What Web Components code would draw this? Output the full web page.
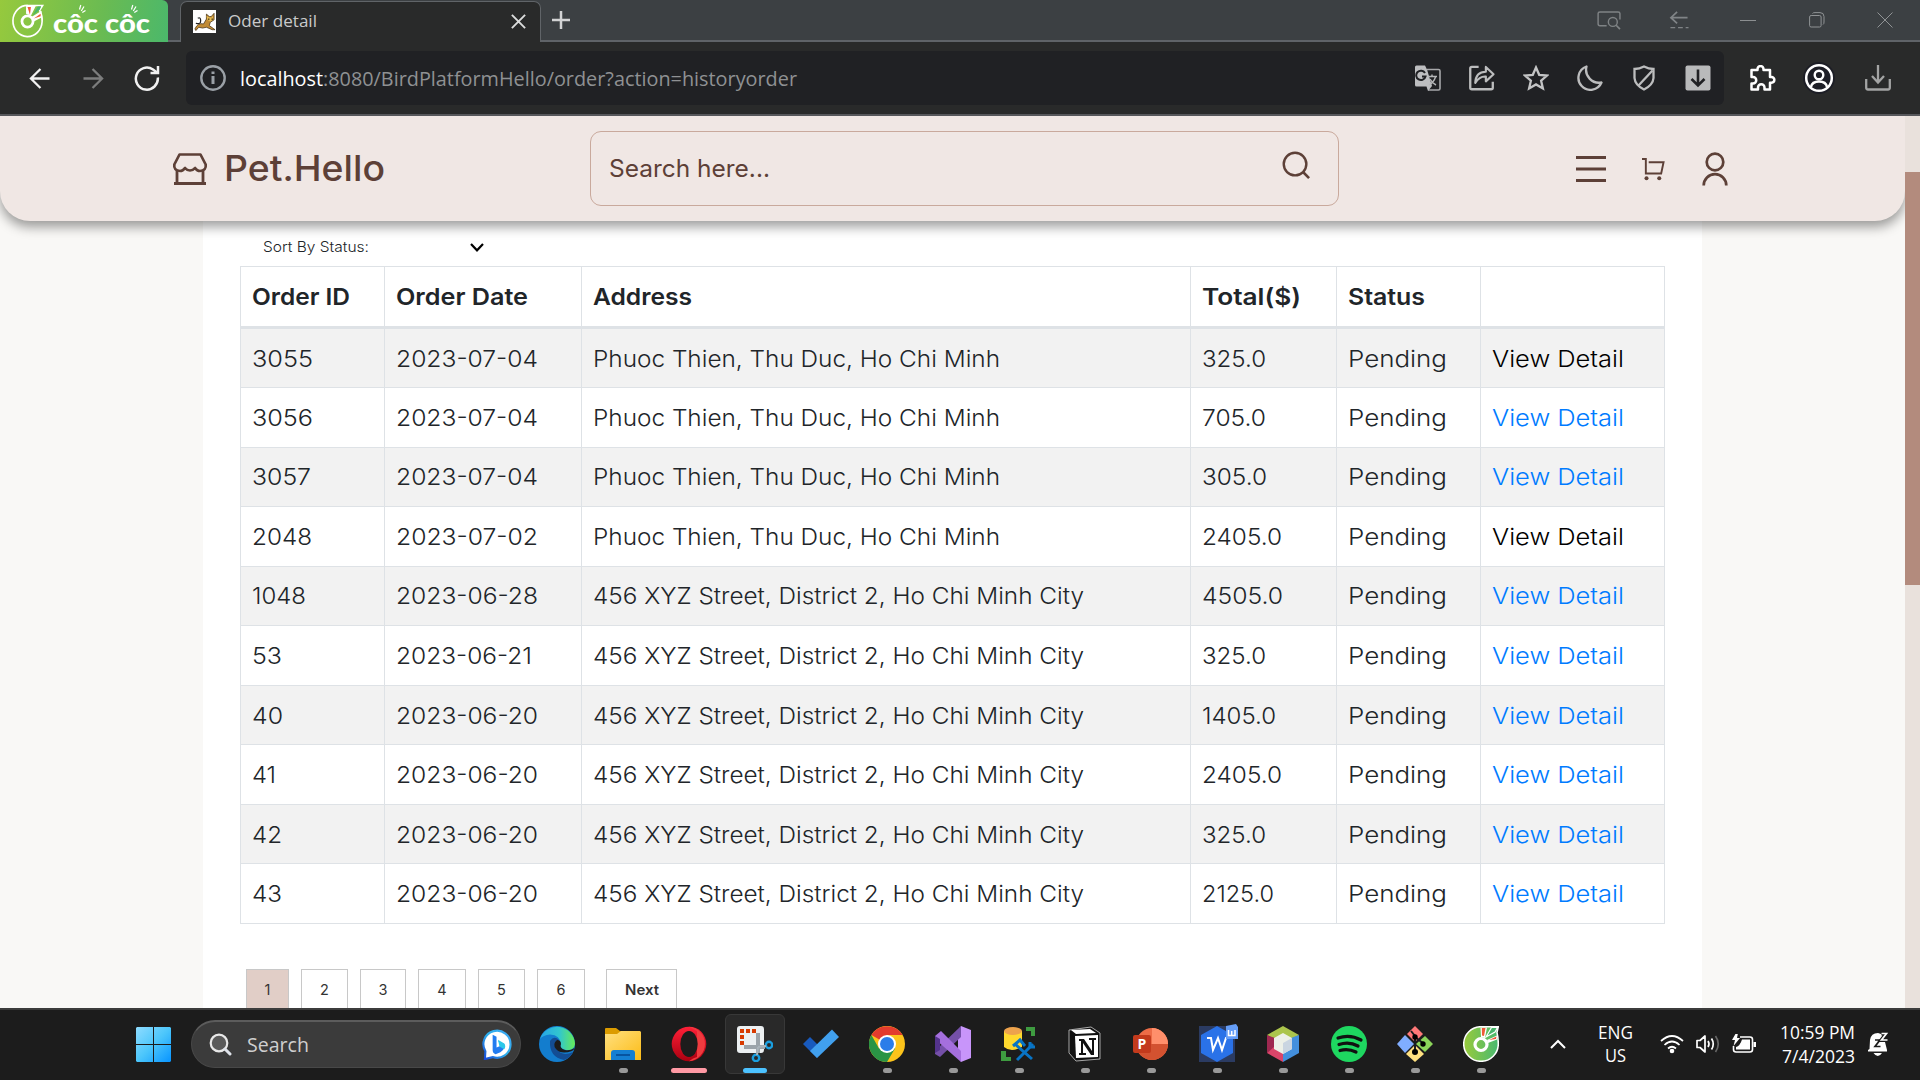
<!DOCTYPE html>
<html lang="en"><head><meta charset="utf-8"><title>Oder detail</title>
<style>
html,body{margin:0;height:1080px;width:1920px;overflow:hidden;background:#f9f8f6}
body{display:flex;flex-direction:column;font-family:Inter,"Open Sans",sans-serif}
</style></head><body>
<browser-chrome></browser-chrome>
<shop-page></shop-page>
<task-bar></task-bar>
<script>
const ICONS={
coccoc:'<svg viewBox="0 0 36 36"><defs><linearGradient id="g"><stop stop-color="#99ca3b"/><stop offset="1" stop-color="#48b970"/></linearGradient></defs><path d="M18 .7H35.3L34 6.500Q35.300 12 35.300 18A17.300 17.300 0 1 1 18 .7Z" fill="url(#g)" stroke="#fff" stroke-width="1.500"/><circle cx="18" cy="18.500" r="6" fill="none" stroke="#fff" stroke-width="3.200"/><path d="M18 11L17.500 1.500H24L22 12ZM24 14L34 9.500 34 13.500 25 17Z" fill="#fff"/><path d="M19 9.500L18.800 2H22.500L21 10ZM26 14L33.500 10.500 33 13Z" fill="#ef5a36"/><path d="M23 11L28.500 1.500H34.500L32 6Z" fill="#49b66b" stroke="#fff" stroke-width="1.200"/></svg>',
cclogo:'<svg viewBox="0 0 34 36"><path d="M17 1.500H32L29 6.500Q32 12 31.500 18A15 16 0 1 1 17 1.500Z" fill="none" stroke="#fff" stroke-width="1.700"/><circle cx="16.500" cy="18" r="5.700" fill="none" stroke="#fff" stroke-width="2.800"/><path d="M15 10V2H25L20 12ZM21 13L31 7 31 14 23 18Z" fill="#fff"/><path d="M16.500 3H20L19 11ZM23 15L30 10V12.500Z" fill="#ef5a36"/><path d="M21.500 12L27 2.500H30.500L29 6Z" fill="#49b66b"/></svg>',
rays:'<svg viewBox="0 0 8 9"><path d="M1.500 5.500L2.800 1M3.300 7L6 2.500M4.300 8.500L7.500 6.500" stroke="#fff" stroke-width="1.200"/></svg>',
fav:'<svg viewBox="0 0 24 28" preserveAspectRatio="none"><rect width="24" height="28" fill="#fff"/><path d="M2 23Q5 15 11 17L14 11V5L17 8H19L22 4V12L18 15 17 19 23 24 20 24 14 21 10 22 6 21 3 25Z" fill="#c18b35" stroke="#3c2c12" stroke-width=".8"/><path d="M3 16Q8 18 8 13T5 10" fill="none" stroke="#222" stroke-width="1.300"/><path d="M14 7L17 9H20L21 6V12L18 14 15 12Z" fill="#e8bd52"/><circle cx="16.500" cy="11" r=".8"/><circle cx="20" cy="11" r=".8"/></svg>',
x:'<svg viewBox="0 0 18 18"><path d="M2 2L16 16M16 2L2 16" stroke="#dcdddd" stroke-width="2"/></svg>',
plus:'<svg viewBox="0 0 18 18"><path d="M9 0V18M0 9H18" stroke="#d2d3d4" stroke-width="2.500"/></svg>',
wsearch:'<svg viewBox="0 0 26 20"><path d="M10 15.500H3Q1 15.500 1 13.500V2.500Q1 1 3 1H22Q24 1 24 2.500V9" fill="none" stroke="#7f8385" stroke-width="1.500"/><circle cx="16.500" cy="11.500" r="4.700" fill="none" stroke="#7f8385" stroke-width="1.500"/><path d="M20 15L24 19" stroke="#7f8385" stroke-width="1.800"/></svg>',
wback:'<svg viewBox="0 0 20 20"><path d="M8 1L1.500 7 8 13M1.500 7H19" fill="none" stroke="#808487" stroke-width="1.800"/><path d="M1 17.500H20" stroke="#808487" stroke-width="1.500" stroke-dasharray="5 3"/></svg>',
wmin:'<svg viewBox="0 0 16 16"><path d="M0 8.500H16" stroke="#8c8f91"/></svg>',
wmax:'<svg viewBox="0 0 16 16"><rect x=".6" y="3.500" width="11.500" height="11.500" rx="1.500" fill="none" stroke="#909395"/><path d="M3.500 1.500Q4 .6 6 .6H11Q15 .6 15 4.500V10Q15 12 14 12.500" fill="none" stroke="#909395"/></svg>',
wx:'<svg viewBox="0 0 16 16"><path d="M.5 .5L15.500 15.500M15.500 .5L.5 15.500" stroke="#909395"/></svg>',
back:'<svg viewBox="0 0 22 22"><path d="M12 1L2 11 12 21M2 11H21.500" fill="none" stroke="#f1f1f1" stroke-width="2.400"/></svg>',
fwd:'<svg viewBox="0 0 22 22"><path d="M10 1L20 11 10 21M20 11H.5" fill="none" stroke="#7c7d7d" stroke-width="2.400"/></svg>',
reload:'<svg viewBox="0 0 26 26"><path d="M23.800 12.500A11 11 0 1 1 19 4.500L23 7.500" fill="none" stroke="#f1f1f1" stroke-width="2.500"/><path d="M24 1V8H16.500" fill="none" stroke="#f1f1f1" stroke-width="2.500"/></svg>',
info:'<svg viewBox="0 0 26 26"><circle cx="13" cy="13" r="11.700" fill="none" stroke="#9aa0a6" stroke-width="2.400"/><path d="M13 11V19M13 6.500V9" stroke="#9aa0a6" stroke-width="3"/></svg>',
translate:'<svg viewBox="0 0 26 26"><path d="M12 4.500H23.500Q25 4.500 25 6V23.500Q25 25 23.500 25H13" fill="none" stroke="#a7a8aa" stroke-width="1.600"/><path d="M0 2Q0 .5 1.500 .5H10L12 4.500 17 21 13 26 11.500 21.500H1.500Q0 21.500 0 20Z" fill="#bdbec0"/><path d="M10 8A4.700 4.700 0 1 0 10.500 11.500H7" fill="none" stroke="#202124" stroke-width="2"/><path d="M13 11.500H22M17 9.500V11.500M20.500 12Q19 17 14 20M15 14Q17 18 21 20" fill="none" stroke="#b5b6b8" stroke-width="1.400"/></svg>',
share:'<svg viewBox="0 0 27 26"><path d="M10 1.500H3Q1.300 1.500 1.300 3V23Q1.300 24.700 3 24.700H23Q24.700 24.700 24.700 23V17" fill="none" stroke="#bcbdbe" stroke-width="2.400"/><path d="M6.500 18Q7 6.500 17.500 6.500V1.500L25.500 9 17.500 16.500V11.500Q11 11 6.500 18Z" fill="none" stroke="#bcbdbe" stroke-width="2.200" stroke-linejoin="round"/></svg>',
star:'<svg viewBox="0 0 26 26"><path d="M13 2.500L16.200 9.800 24 10.500 18.100 15.700 19.900 23.500 13 19.400 6.100 23.500 7.900 15.700 2 10.500 9.800 9.800Z" fill="none" stroke="#c3c4c5" stroke-width="2.300"/></svg>',
moon:'<svg viewBox="0 0 26 26"><path d="M9.500 1.500A12 12 0 1 0 24.500 17.500 13 13 0 0 1 9.500 1.500Z" fill="none" stroke="#bcbdbe" stroke-width="2.300" stroke-linejoin="round"/></svg>',
shield:'<svg viewBox="0 0 26 26"><path d="M13 1.500Q17.500 4 22.500 4V13Q22 20 13 24.500Q4 20 3.500 13V4Q8.500 4 13 1.500Z" fill="none" stroke="#bcbdbe" stroke-width="2.300"/><path d="M21.500 5.500L7.500 20.500" stroke="#bcbdbe" stroke-width="2.300"/></svg>',
down:'<svg viewBox="0 0 26 26"><rect x=".5" y=".5" width="25" height="25" rx="2" fill="#b9babb"/><path d="M13 4.500V20M6.500 14L13 20.500 19.500 14" fill="none" stroke="#202124" stroke-width="2.600"/></svg>',
puzzle:'<svg viewBox="0 0 26 26"><path d="M2 5H7.500V4A3 3 0 0 1 13.500 4V5H20V12H21.500A2.800 2.800 0 0 1 21.500 17.700H20V24.500H14.500V22.500A3.200 3.200 0 0 0 8 22.500V24.500H1.500V18.500H3A3.200 3.200 0 0 0 3 12H1.500V5Z" fill="none" stroke="#fff" stroke-width="2.500" stroke-linejoin="round"/></svg>',
profile:'<svg viewBox="0 0 32 32"><circle cx="16" cy="16" r="16" fill="#1d1e26"/><circle cx="16" cy="16" r="12.800" fill="none" stroke="#fff" stroke-width="2.500"/><circle cx="16" cy="13" r="4.300" fill="none" stroke="#fff" stroke-width="2.400"/><path d="M8 25Q9 19.500 16 19.500T24 25" fill="none" stroke="#fff" stroke-width="2.400"/></svg>',
dl:'<svg viewBox="0 0 26 26"><path d="M13 0V17M7 11L13 17.500 19 11M1.200 14V22.500Q1.200 24.500 3 24.500H23Q24.800 24.500 24.800 22.500V14" fill="none" stroke="#a3a4a4" stroke-width="2.300"/></svg>',
store:'<svg viewBox="0 0 36 34"><path d="M7.500 2.500H28.500L33.700 12.500Q34.500 18.500 28 19Q25 19 23 16Q21 18.500 18 18.500T13 16Q11 19 8 19Q1.500 18.500 2.300 12.500Z" fill="none" stroke="#5d4037" stroke-width="2.700" stroke-linejoin="round"/><path d="M5 18V31.500M31 18V31.500M2 31.500H34" fill="none" stroke="#5d4037" stroke-width="2.800"/></svg>',
search:'<svg viewBox="0 0 30 30"><circle cx="13.500" cy="13.500" r="11.700" fill="none" stroke="#5d4037" stroke-width="2.500"/><path d="M21.500 21.500L28 28" stroke="#5d4037" stroke-width="2.700"/></svg>',
menu:'<svg viewBox="0 0 30 28"><path d="M0 2.500H30M0 14H30M0 25.500H30" stroke="#5d4037" stroke-width="2.800"/></svg>',
cart:'<svg viewBox="0 0 24 24"><path d="M0 1.500H4V16.700H20L22.500 5H7" fill="none" stroke="#5d4037" stroke-width="2"/><circle cx="4.700" cy="21.700" r="2.100" fill="#5d4037"/><circle cx="18" cy="21.700" r="2.100" fill="#5d4037"/></svg>',
user:'<svg viewBox="0 0 26 34"><circle cx="13" cy="10" r="8.300" fill="none" stroke="#5d4037" stroke-width="2.700"/><path d="M1.700 33.500A11.300 11.300 0 0 1 24.300 33.500" fill="none" stroke="#5d4037" stroke-width="2.700"/></svg>',
chev:'<svg viewBox="0 0 14 9"><path d="M1 1L7 7.300 13 1" fill="none" stroke="#000" stroke-width="2.200"/></svg>',
win:'<svg viewBox="0 0 35 35"><defs><linearGradient id="g" x2="1" y2="1"><stop stop-color="#8fdcff"/><stop offset=".5" stop-color="#4cc6fb"/><stop offset="1" stop-color="#0794ff"/></linearGradient></defs><path d="M1 0H17V17H0V1ZM18 0H34L35 1V17H18ZM0 18H17V35H1L0 34ZM18 18H35V34L34 35H18Z" fill="url(#g)"/></svg>',
tsearch:'<svg viewBox="0 0 23 23"><circle cx="10" cy="10" r="8.300" fill="#5a5a5a" stroke="#e8e8e8" stroke-width="2.200"/><path d="M16 16L21 21" stroke="#dfe3ea" stroke-width="3" stroke-linecap="round"/></svg>',
bing:'<svg viewBox="0 0 32 32"><defs><linearGradient id="g" x1="1" x2="0" y2="1"><stop stop-color="#3fa8f5"/><stop offset=".5" stop-color="#2caeea"/><stop offset="1" stop-color="#1745d8"/></linearGradient></defs><path d="M3 31L3.500 23A14 14 0 1 1 11 29L3 31Z" fill="#fff" stroke="url(#g)" stroke-width="2.200"/><path d="M11 6L15 8V19L20 17 16.500 12 23 15.500Q25 20 19 24L14 26Q11 25 11 22Z" fill="#227cf0"/><path d="M16.500 11L23 15Q25 18 23 21L18 18Z" fill="#2cc8e8"/></svg>',
edge:'<svg viewBox="0 0 36 36"><defs><linearGradient id="g"><stop stop-color="#27a5e6"/><stop offset=".55" stop-color="#31c6cf"/><stop offset="1" stop-color="#66eb57"/></linearGradient></defs><circle cx="18" cy="18" r="18" fill="#137dce"/><path d="M1 13A18 18 0 0 1 36 18Q35 25 27 24Q21 23 21.500 19Q22 9 11 8.500Q4 9 1 13Z" fill="url(#g)"/><path d="M11 15Q10 31 25 34Q32 31 34 26Q23 31 18 23Q15 17 20 14Q15 9 11 15Z" fill="#134d94"/><path d="M18 14Q13 18 17 23Q22 29 33 25Q35 24 35.500 22Q31 25 26 24Q20 22 22 18Q22 14 18 14Z" fill="#1c1c1c"/></svg>',
folder:'<svg viewBox="0 0 36 36"><defs><linearGradient id="g" x2="1" y2="1"><stop stop-color="#ffe080"/><stop offset="1" stop-color="#fcbc17"/></linearGradient></defs><path d="M0 3Q0 2 1 2H11L15 5H20V12H0Z" fill="#dc9c00"/><path d="M0 8H12L16 5H35L36 6V34H0Z" fill="url(#g)"/><path d="M6 34V27Q6 24 9 24H27Q30 24 30 27V34Z" fill="#147fd2"/><path d="M11 29H25" stroke="#0754a0" stroke-width="2"/></svg>',
opera:'<svg viewBox="0 0 36 36"><defs><linearGradient id="g" x2="0" y2="1"><stop stop-color="#ff2038"/><stop offset="1" stop-color="#aa0010"/></linearGradient></defs><circle cx="18" cy="18" r="17.300" fill="url(#g)"/><path d="M18 .8A17.300 17.300 0 0 1 18 35.300Q22 32 26 31V5Z" fill="#ef3b3f"/><ellipse cx="18" cy="18" rx="8.700" ry="13" fill="#1c1c1c"/></svg>',
snip:'<svg viewBox="0 0 36 36"><rect x="0" y="0" width="27" height="27" rx="3" fill="#ecf0f2"/><path d="M3 3H7V7H3ZM9 3H13V7H9ZM15 3H19V7H15ZM3 9H7V13H3ZM3 15H7V19H3Z" fill="#d83b01"/><path d="M21 7V27M7 21H28" stroke="#9ca4aa" stroke-width="4"/><circle cx="32" cy="19" r="3.200" fill="none" stroke="#1a9fe0" stroke-width="2.400"/><circle cx="19" cy="32" r="3.200" fill="none" stroke="#1a9fe0" stroke-width="2.400"/><path d="M21 21L29 20M21 21L20 29" stroke="#aab4bb" stroke-width="2"/></svg>',
todo:'<svg viewBox="0 0 36 36"><path d="M0 18L7 11 18 22 14 32Z" fill="#185abd"/><path d="M7 25L29 3.500 36 11 14 32Z" fill="#41a0ee"/></svg>',
chrome:'<svg viewBox="0 0 36 36"><circle cx="18" cy="18" r="18" fill="#fcc31b"/><path d="M18 18L2.500 9A18 18 0 0 1 33.500 9H18Z" fill="#e33b2e"/><path d="M2.400 9A18 18 0 0 0 18 36L26 22.500 18 18 10 22.500Z" fill="#2a9445"/><circle cx="18" cy="18" r="9" fill="#fff"/><circle cx="18" cy="18" r="7" fill="#2b7de9"/></svg>',
vs:'<svg viewBox="0 0 36 36"><path d="M26 0L36 4V32L26 36 23 27V9Z" fill="#c895fa"/><path d="M0 25L26 0V11L5 31 0 28Z" fill="#7550a8"/><path d="M0 10L6 5 26 25V36L0 13Z" fill="#a56fdd"/><path d="M0 10L5 13V24L0 27Z" fill="#54338c"/></svg>',
ssms:'<svg viewBox="0 0 36 36"><path d="M25 1H34V10H30V5H25ZM0 25H5V31H10V35H0Z" fill="#3e9b40"/><path d="M3 5V21Q10 27 21 21V5Z" fill="#ffd92e"/><ellipse cx="12" cy="5" rx="9" ry="4" fill="#eda34d"/><path d="M14 18L31 33M32 18L16 34" stroke="#0874c5" stroke-width="3"/><path d="M12 20L19 14 24 20M29 16V21H34" fill="none" stroke="#0874c5" stroke-width="3"/></svg>',
notion:'<svg viewBox="0 0 36 36"><path d="M2 4L24 1 33 7V33L9 35 2 27Z" fill="#111" stroke="#ccc" stroke-width=".8"/><path d="M4 4L23 3 29 7 9 8Z" fill="#fff"/><path d="M8 10L31 9V31L9 32Z" fill="#fff"/><path d="M12 13H17L25 25V14H22V12H29V14H27V29H24L16 17V27H19V29H12V27H14V15H12Z" fill="#111"/></svg>',
ppt:'<svg viewBox="0 0 36 36"><circle cx="19" cy="18" r="16" fill="#ed6c47"/><path d="M19 2A16 16 0 0 1 35 18H19Z" fill="#ff8f6b"/><path d="M3 18H35A16 16 0 0 1 3 18Z" fill="#d35230"/><rect x="0" y="9" width="18" height="18" rx="2" fill="#c33a1c"/><text x="4.500" y="23" font-family="Open Sans" font-weight="700" font-size="14" fill="#fff">P</text></svg>',
wps:'<svg viewBox="0 2 36 36" style="overflow:visible"><path d="M0 2H36V38H0Z" fill="#2b3b62"/><path d="M18 2L34 11V29L18 38 2 29V11Z" fill="#2a72e8"/><path d="M8 14H12L14 26 19 14 23 26 27 14H30" fill="none" stroke="#fff" stroke-width="2"/><path d="M27 2L37 0 39 3V15H27Z" fill="#649df7"/><path d="M29.500 6V11.500H36V6M32.700 7V11" fill="none" stroke="#fff" stroke-width="1.500"/></svg>',
netbeans:'<svg viewBox="0 0 36 36"><path d="M18 0L34 9 18 18 2 9Z" fill="#acc54c"/><path d="M2 9V27L10 22V12Z" fill="#9f2850"/><path d="M2 27L18 36V24L10 20Z" fill="#db4569"/><path d="M34 9V27L18 36V24L26 12Z" fill="#438fdd"/><path d="M18 7L27 12V23L18 28 9 23V12Z" fill="#edf0e8"/><path d="M18 17L27 12V23L18 28Z" fill="#cad5e1"/></svg>',
spotify:'<svg viewBox="0 0 36 36"><circle cx="18" cy="18" r="18" fill="#1ed760"/><path d="M7 12Q19 8 30 14M8 18.500Q18 15 27 20M9 24.500Q17 22 25 26" fill="none" stroke="#111" stroke-width="3.200" stroke-linecap="round"/></svg>',
git:'<svg viewBox="0 0 36 36"><path d="M18 0L26 8 18 16 10 8Z" fill="#ff7878"/><path d="M8 9L17 18 8 27 0 18Z" fill="#80adff"/><path d="M28 10L36 18 28 26 19 18Z" fill="#8bd45a"/><path d="M18 19L27 28 18 36 9 28Z" fill="#ffe080"/><path d="M14 5L18 10V27M18 11L27 18" fill="none" stroke="#181c20" stroke-width="2"/><circle cx="18" cy="11" r="2.700"/><circle cx="18" cy="26" r="3"/><circle cx="26" cy="18" r="2.700"/></svg>',
up:'<svg viewBox="0 0 16 10"><path d="M1 9L8 2 15 9" fill="none" stroke="#fff" stroke-width="2"/></svg>',
wifi:'<svg viewBox="0 0 24 20"><path d="M1 7Q12-3 23 7M4.500 11Q12 4 19.500 11M8 14.500Q12 11 16 14.500" fill="none" stroke="#fff" stroke-width="1.700"/><circle cx="12" cy="17" r="2.300" fill="#fff"/></svg>',
sound:'<svg viewBox="0 0 24 20"><path d="M1 6.500H4L9 2V18L4 13.500H1Z" fill="none" stroke="#fff" stroke-width="1.700" stroke-linejoin="round"/><path d="M12 7Q14 10 12 13M15.500 4.500Q19 10 15.500 15.500" fill="none" stroke="#fff" stroke-width="1.700"/><path d="M19.500 2Q25 10 19.500 18" fill="none" stroke="#666" stroke-width="1.700"/></svg>',
batt:'<svg viewBox="0 0 24 20"><path d="M8 3H18Q20.500 3 20.500 5.500V15.500Q20.500 18 18 18H4Q1.500 18 1.500 15.500V12" fill="none" stroke="#fff" stroke-width="1.600"/><path d="M10 5.500H18V15.500H4V13Q8 12 10 5.500Z" fill="#fff"/><path d="M21.500 8H24V13H21.500ZM4 -1L0 6H3L1.500 12 8 4H5L6 -1Z" fill="#fff"/></svg>',
bell:'<svg viewBox="0 0 22 24"><path d="M2.500 17L3 8Q4 1 11 1Q18 2 18 10L20 18V19.500H1V18ZM6.500 21H15Q13 24 10.800 24T6.500 21Z" fill="#fff"/><path d="M8 8H13L8 14.500H13.500" fill="none" stroke="#1c1c1c" stroke-width="1.700"/><path d="M14.500 1.500H19.500L14.500 8H20.500" fill="none" stroke="#1c1c1c" stroke-width="4"/><path d="M14.500 1.500H19.500L14.500 8H20.500" fill="none" stroke="#fff" stroke-width="1.700"/></svg>'
};
const define=(n,html)=>customElements.define(n,class extends HTMLElement{
 constructor(){super();this.attachShadow({mode:'open'}).innerHTML=html;}
});
// Inline glyph, sized through its w and h attributes.
customElements.define('ui-icon',class extends HTMLElement{
 connectedCallback(){
  if(this.shadowRoot)return;
  this.attachShadow({mode:'open'}).innerHTML='<style>:host{display:block;flex:none;width:'+this.getAttribute('w')+'px;height:'+this.getAttribute('h')+'px}svg{display:block;width:100%;height:100%}</style>'+ICONS[this.getAttribute('name')];
 }
});
// One line of text, stretched horizontally to fill the width w.
customElements.define('fit-text',class extends HTMLElement{
 connectedCallback(){
  if(this.shadowRoot)return;
  this.attachShadow({mode:'open'}).innerHTML='<style>:host{display:block;flex:none;white-space:pre}span{display:inline-block;transform-origin:0 50%}</style><span><slot></slot></span>';
  const s=this.shadowRoot.querySelector('span'),w=+this.getAttribute('w');
  this.style.width=w+'px';
  s.style.transform='scaleX('+w/s.getBoundingClientRect().width+')';
 }
});
define('browser-chrome',`<style>
:host{display:block;flex:none;height:116px;box-sizing:border-box;background:#292a2a;border-bottom:2px solid #56575b;font-family:"Open Sans",sans-serif}
*{box-sizing:border-box}
.tabs{height:42px;background:#3c4043;display:flex}
.logo{width:168px;height:42px;background:linear-gradient(100deg,#96c93d,#6abb52 60%,#4bb86b);border-radius:0 6px 0 0;display:flex;align-items:center;padding-left:11px;color:#fff}
.word{font:900 26px/34px Lato;margin-left:7px;position:relative;padding-top:4px}
.word ui-icon{position:absolute;left:25px;top:2px}
.gap{width:12px;border-bottom:2px solid #5f6368}
.tab{width:361px;height:41px;margin-top:1px;border:1px solid #606468;border-bottom:0;border-radius:7px 7px 0 0;background:#292a2a;display:flex;align-items:center;padding:0 13px 2px 12px;color:#c9cacb;font-size:16.800px}
.tab fit-text{margin:-2px auto 0 12px}
.rest{flex:1;border-bottom:2px solid #5f6368;display:flex;align-items:center;padding:0 27px 0 11px}
.win{margin-left:auto;display:flex}.win div{width:69px;display:flex;justify-content:center}.win div{align-items:center}
.win div:last-child{width:16px;margin-left:26px}
.bar{height:72px;display:flex;align-items:center;padding:0 29px}
.addr{width:1539px;height:54px;margin-left:26px;background:#202124;border-radius:6px;display:flex;align-items:center;padding:0 13px 0 14px;color:#8f9193;font-size:20.800px}
.icons{display:flex;gap:28px;margin-left:auto}
</style><div class="tabs"><div class="logo"><ui-icon name="cclogo" w="34" h="35"></ui-icon><div class="word" style="margin-left:8px"><fit-text w="45">côc</fit-text><ui-icon name="rays" w="8" h="9"></ui-icon></div><div class="word"><fit-text w="45">côc</fit-text><ui-icon name="rays" w="8" h="9"></ui-icon></div></div><div class="gap"></div>
<div class="tab"><ui-icon name="fav" w="23" h="23"></ui-icon><fit-text w="89">Oder detail</fit-text><ui-icon name="x" w="17" h="17"></ui-icon></div>
<div class="rest"><ui-icon name="plus" w="18" h="18"></ui-icon><div class="win"><div><ui-icon name="wsearch" w="25" h="19"></ui-icon></div><div><ui-icon name="wback" w="20" h="19"></ui-icon></div><div><ui-icon name="wmin" w="16" h="16"></ui-icon></div><div><ui-icon name="wmax" w="16" h="16"></ui-icon></div><div><ui-icon name="wx" w="16" h="16"></ui-icon></div></div></div></div>
<div class="bar"><ui-icon name="back" w="21" h="21"></ui-icon><ui-icon name="fwd" w="21" h="21" style="margin-left:33px"></ui-icon><ui-icon name="reload" w="26" h="26" style="margin-left:30px"></ui-icon>
<div class="addr"><ui-icon name="info" w="26" h="26"></ui-icon><fit-text w="83" style="margin-left:14px;color:#fff">localhost</fit-text><fit-text w="474">:8080/BirdPlatformHello/order?action=historyorder</fit-text><div class="icons"><ui-icon name="translate" w="26" h="26"></ui-icon><ui-icon name="share" w="26" h="26"></ui-icon><ui-icon name="star" w="26" h="26"></ui-icon><ui-icon name="moon" w="26" h="26"></ui-icon><ui-icon name="shield" w="26" h="26"></ui-icon><ui-icon name="down" w="26" h="26"></ui-icon></div></div>
<ui-icon name="puzzle" w="26" h="26" style="margin-left:26px"></ui-icon><ui-icon name="profile" w="32" h="32" style="margin-left:27px"></ui-icon><ui-icon name="dl" w="26" h="26" style="margin-left:30px"></ui-icon></div>`);
define('shop-header',`<style>
:host{display:flex;flex:none;align-items:center;height:105px;box-sizing:border-box;padding:0 177px 0 172px;background:#f0e7e4;border-radius:0 0 30px 30px;box-shadow:0 6px 12px rgba(0,0,0,.38);position:relative;color:#5d4037}
.brand{font-size:35.500px;font-weight:500;margin-left:16px}
.box{box-sizing:border-box;width:750px;height:75px;border:1px solid #c9a99c;border-radius:11px;display:flex;align-items:center;justify-content:space-between;padding:0 27px 0 18px;margin-left:205px;font-size:24px}
.box ui-icon{margin-bottom:7px}
</style><ui-icon name="store" w="36" h="34"></ui-icon><fit-text class="brand" w="161">Pet.Hello</fit-text><div class="box"><fit-text w="161">Search here...</fit-text><ui-icon name="search" w="29" h="29"></ui-icon></div>
<ui-icon name="menu" w="30" h="28" style="margin-left:237px"></ui-icon><ui-icon name="cart" w="23" h="24" style="margin-left:36px"></ui-icon><ui-icon name="user" w="26" h="34" style="margin-left:37px"></ui-icon>`);
const rows=[['3055',60,'2023-07-04',142,0,'325.0',63,1],['3056',60,'2023-07-04',142,0,'705.0',63,0],['3057',58,'2023-07-04',142,0,'305.0',64,0],['2048',59,'2023-07-02',142,0,'2405.0',79,1],['1048',53,'2023-06-28',142,1,'4505.0',80,0],['53',29,'2023-06-21',136,1,'325.0',63,0],['40',30,'2023-06-20',142,1,'1405.0',73,0],['41',23,'2023-06-20',142,1,'2405.0',79,0],['42',29,'2023-06-20',142,1,'325.0',63,0],['43',29,'2023-06-20',142,1,'2125.0',71,0]];
const c=(t,w,k='')=>`<div class="c ${k}">${t?`<fit-text w="${w}">${t}</fit-text>`:''}</div>`;
define('order-table',`<style>
:host{display:block;width:1425px;box-sizing:border-box;border:1px solid #dee2e6;border-width:1px 0 0 1px;font-size:23.400px;font-weight:350;color:#212529}
.r{display:grid;grid-template-columns:144px 197px 609px 146px 144px 184px;height:59.550px;box-sizing:border-box}
.r:nth-of-type(2){height:59px}
.r:nth-of-type(even){background:#f2f2f2}
.r.h{height:62px;font-weight:600}.h .c{border-bottom-width:3px}
.c{border:0 solid #dee2e6;border-width:0 1px 1px 0;padding-left:11px;display:flex;align-items:center}
.l{color:#007bff}.v{color:#000}
</style><div class="r h">${c('Order ID',98)+c('Order Date',132)+c('Address',99)+c('Total($)',99)+c('Status',77)+c()}</div>`+rows.map(r=>`<div class="r">${c(r[0],r[1]+1)+c(r[2],r[3])+(r[4]?c('456 XYZ Street, District 2, Ho Chi Minh City',491):c('Phuoc Thien, Thu Duc, Ho Chi Minh',407))+c(r[5],r[6]+1)+c('Pending',99)+c('View Detail',132,r[7]?'v':'l')}</div>`).join(''));
define('page-links',`<style>
:host{display:flex;margin:45px 0 0 6px;font-size:14.500px;color:#333}
div{box-sizing:border-box;height:44px;border:1px solid #c8c8c8;display:flex;justify-content:center;align-items:center;margin-right:12px;padding-bottom:2px}
.on{background:#e1cec7}.n{font-weight:600;margin-left:9px}
</style>`+[43,47,46,48,47,48].map((w,i)=>`<div class="${i?'':'on'}" style="width:${w}px">${i+1}</div>`).join('')+'<div class="n" style="width:71px"><fit-text w="34">Next</fit-text></div>');
define('shop-page',`<style>
:host{display:flex;flex:none;height:892px;overflow:hidden;background:#f9f8f6}
.main{width:1905px;display:flex;flex-direction:column}
.content{width:1499px;margin-left:203px;flex:1;background:#fff;box-sizing:border-box;padding:14px 0 0 37px}
.sort{display:flex;align-items:center;box-sizing:border-box;height:31px;padding:0 0 7px 23px;font-size:14.600px;font-weight:350;color:#212529}
.bar{width:15px;background:#e9e1dc;padding-top:56px;box-sizing:border-box;position:relative}.bar div{height:413px;background:#b38b7d}
</style><div class="main"><shop-header></shop-header><div class="content"><div class="sort"><fit-text w="106">Sort By Status:</fit-text><ui-icon name="chev" w="14" h="9" style="margin-left:101px"></ui-icon></div><order-table></order-table><page-links></page-links></div></div><div class="bar"><div></div></div>`);
const apps=['edge','folder','opera','snip','todo','chrome','vs','ssms','notion','ppt','wps','netbeans','spotify','git','coccoc'];
define('task-bar',`<style>
:host{display:flex;flex:none;align-items:center;height:72px;box-sizing:border-box;background:#1c1c1c;border-top:2px solid #3c3c3c;padding:0 0 2px 136px;color:#fff;font-family:"Open Sans",sans-serif;font-size:17.500px}
*{box-sizing:border-box}
.s{width:330px;height:48px;border-radius:24px;background:#3b3b3b;border:1px solid #484848;border-top:2px solid #5c5c5c;margin-left:20px;display:flex;align-items:center;padding:0 7px 0 17px;color:#cfcfcf;font-size:20px}
.apps{display:flex;gap:6px;margin-left:6px}
.a{width:60px;height:60px;border-radius:6px;display:flex;flex-direction:column;align-items:center;padding-top:12px;border:0 solid #383838}
.a.on{background:#292929;border-width:1px;padding-top:11px}
i{display:block;width:9px;height:5px;border-radius:3px;background:#999;margin-top:6px}
.tx{line-height:24px;display:flex;flex-direction:column}
</style><ui-icon name="win" w="35" h="35"></ui-icon><div class="s"><ui-icon name="tsearch" w="23" h="23"></ui-icon><fit-text w="62" style="margin:0 auto 0 15px">Search</fit-text><ui-icon name="bing" w="31" h="31"></ui-icon></div>
<div class="apps">${apps.map((a,i)=>`<div class="a ${i==3?'on':''}"><ui-icon name="${a}" w="36" h="36"></ui-icon>${i==0||i==4?'':`<i style="${i==2?'width:36px;background:#ff99a4':i==3?'width:24px;background:#4cc2ff':''}"></i>`}</div>`).join('')}</div>
<ui-icon name="up" w="16" h="10" style="margin-left:39px"></ui-icon><div class="tx" style="margin-left:32px;align-items:center;line-height:23px"><fit-text w="35">ENG</fit-text><fit-text w="21">US</fit-text></div>
<ui-icon name="wifi" w="24" h="20" style="margin-left:27px"></ui-icon><ui-icon name="sound" w="24" h="20" style="margin-left:12px"></ui-icon><ui-icon name="batt" w="24" h="20" style="margin-left:12px"></ui-icon>
<div class="tx" style="margin-left:24px;align-items:flex-end"><fit-text w="75">10:59 PM</fit-text><fit-text w="73">7/4/2023</fit-text></div><ui-icon name="bell" w="22" h="24" style="margin-left:12px"></ui-icon>`);
</script></body></html>
